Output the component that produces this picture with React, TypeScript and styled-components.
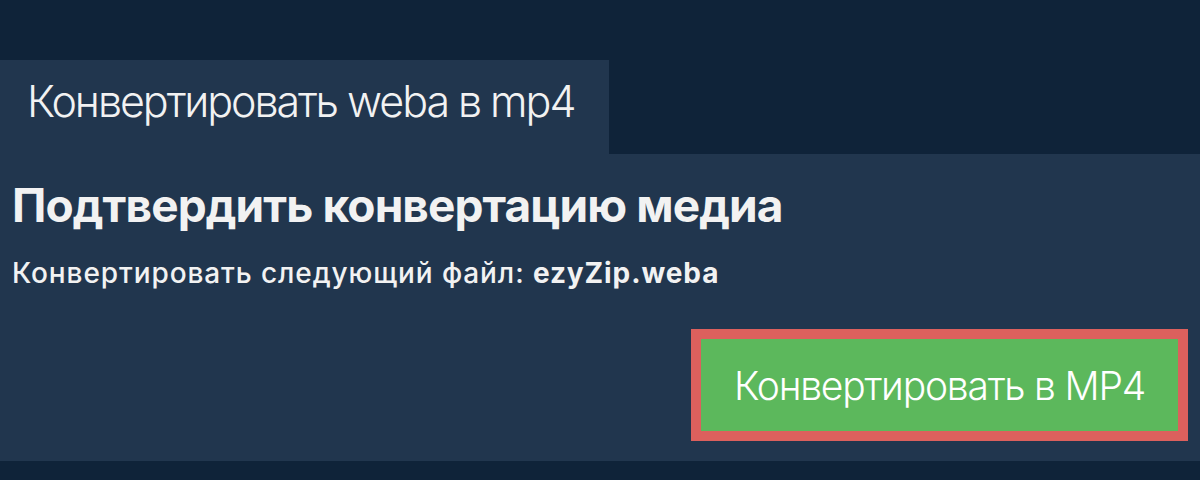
import * as React from 'react';
import styled, { createGlobalStyle } from 'styled-components';

const GlobalStyle = createGlobalStyle`
  html, body {
    margin: 0;
    padding: 0;
    background: #0f2339;
    font-family: Inter, 'Noto Sans', sans-serif;
    color: #f2f2f2;
  }
`;

const Page = styled.div`
  width: 1200px;
  height: 480px;
  padding-top: 60px;
  box-sizing: border-box;
  overflow: hidden;
`;

const Tab = styled.div`
  width: 609px;
  height: 94px;
  box-sizing: border-box;
  padding: 15px 0 0 27px;
  background: #21364e;
  font-size: 43px;
  line-height: 52px;
  font-weight: 300;
  letter-spacing: -2.05px;
  white-space: nowrap;
`;

const Panel = styled.div`
  height: 307px;
  box-sizing: border-box;
  padding: 23px 12px 0 12px;
  background: #21364e;
  display: flex;
  flex-direction: column;
`;

const Heading = styled.h1`
  margin: 0;
  font-size: 46px;
  font-weight: 700;
  line-height: 56px;
  letter-spacing: -0.9px;
  white-space: nowrap;
`;

const FileLine = styled.p`
  margin: 23px 0 0 0;
  font-size: 28px;
  font-weight: 500;
  line-height: 34px;
  letter-spacing: 0.9px;
  white-space: nowrap;
  b {
    font-weight: 700;
  }
`;

const Actions = styled.div`
  display: flex;
  justify-content: flex-end;
  margin-top: 39px;
`;

const ConvertButton = styled.button`
  width: 497px;
  height: 112px;
  box-sizing: border-box;
  border: 10px solid #dc605d;
  background: #5cb85c;
  color: #fff;
  font-family: Inter, 'Noto Sans', sans-serif;
  font-size: 39px;
  font-weight: 300;
  letter-spacing: -1.2px;
  padding: 0;
  cursor: pointer;
`;

export default function App() {
  return (
    <Page>
      <GlobalStyle />
      <Tab>Конвертировать weba в mp4</Tab>
      <Panel>
        <Heading>Подтвердить конвертацию медиа</Heading>
        <FileLine>
          Конвертировать следующий файл: <b>ezyZip.weba</b>
        </FileLine>
        <Actions>
          <ConvertButton>Конвертировать в MP4</ConvertButton>
        </Actions>
      </Panel>
    </Page>
  );
}
